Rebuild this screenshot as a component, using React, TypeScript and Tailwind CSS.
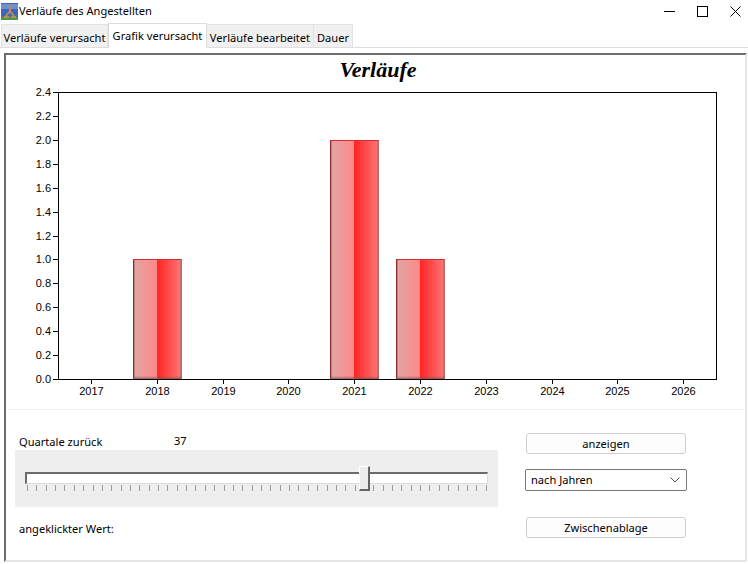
import React from "react";

const ys = ["2.4","2.2","2.0","1.8","1.6","1.4","1.2","1.0","0.8","0.6","0.4","0.2","0.0"];
const years = [2017,2018,2019,2020,2021,2022,2023,2024,2025,2026];
const L = 52, T = 37, R = 710, B = 324;
const bars = [{x:127,top:204},{x:324,top:85},{x:390,top:204}];

function Chart() {
  return (
    <svg width="740" height="354" viewBox="0 0 740 354" className="block">
      <defs>
        <linearGradient id="barL" x1="0" x2="1" y1="0" y2="0"><stop offset="0" stopColor="#dfa6a6"/><stop offset="1" stopColor="#ff8888"/></linearGradient>
        <linearGradient id="barR" x1="0" x2="1" y1="0" y2="0"><stop offset="0" stopColor="#ff2424"/><stop offset="1" stopColor="#ff7878"/></linearGradient>
        <linearGradient id="barB" x1="0" x2="0" y1="0" y2="1"><stop offset="0" stopColor="#805050" stopOpacity="0"/><stop offset="1" stopColor="#805050" stopOpacity=".75"/></linearGradient>
      </defs>
      <text x="372" y="22" textAnchor="middle" fontFamily="'Liberation Serif', serif" fontWeight="700" fontStyle="italic" fontSize="22" fill="#000">Verläufe</text>
      <rect x={L+.5} y={T+.5} width={R-L} height={B-T} fill="#fff" stroke="#000"/>
      {ys.map((v,i)=>{const y=T+(B-T)*i/12;return <g key={v}>
        <line x1={L-5} x2={L} y1={Math.round(y)+.5} y2={Math.round(y)+.5} stroke="#000"/>
        <text x={L-7} y={y+4} textAnchor="end" fontFamily="'Liberation Sans', sans-serif" fontSize="11" fill="#000">{v}</text></g>})}
      {years.map((v,i)=>{const x=Math.round(L+(R-L)*(i+.5)/10);return <g key={v}>
        <line x1={x+.5} x2={x+.5} y1={B} y2={B+5} stroke="#000"/>
        <text x={x+.5} y={B+16} textAnchor="middle" fontFamily="'Liberation Sans', sans-serif" fontSize="11" fill="#000">{v}</text></g>})}
      {bars.map(b=>{const t=b.top;const h=B-t;return <g key={b.x}>
        <rect x={b.x} y={t} width="24" height={h} fill="url(#barL)"/>
        <rect x={b.x+24} y={t} width="25" height={h} fill="url(#barR)"/>
        <rect x={b.x} y={t} width="1" height={h} fill="#8a2a2a"/>
        <rect x={b.x+1} y={t} width="1" height={h} fill="#b87070" opacity=".7"/>
        <rect x={b.x} y={t} width="49" height="1" fill="#cc3030"/>
        <path d={`M${b.x+49} ${t}V${B}H${b.x+47}V${t+2}Z`} fill="#b87070"/>
        <rect x={b.x} y={B-3} width="49" height="3" fill="url(#barB)"/>
      </g>})}
    </svg>
  );
}

export default function App() {
  return (
    <div className="w-[748px] h-[564px] bg-white overflow-hidden flex flex-col text-[11.1px] leading-4 text-black font-['Noto_Sans','Open_Sans',sans-serif]">
      <div className="h-[22px] flex items-center pl-[1px] shrink-0">
        <svg width="17" height="17" viewBox="0 0 17 17" className="shrink-0">
          <rect width="17" height="17" fill="#3f66b8"/>
          <rect y="1" width="17" height="5" fill="#6f8fd0"/>
          <rect y="14" width="17" height="3" fill="#4d9a45"/>
          <path d="M9 2v8M9 8L5 13M9 8l4 5M3 14h5M10 14h5" stroke="#b98f55" strokeWidth="2" fill="none"/>
        </svg>
        <span className="ml-[1px]">Verläufe des Angestellten</span>
        <div className="ml-auto flex items-center gap-[22px] pr-[7px]">
          <svg width="11" height="11" viewBox="0 0 11 11"><path d="M0 5.5h11" stroke="#000"/></svg>
          <svg width="11" height="11" viewBox="0 0 11 11"><rect x=".5" y=".5" width="10" height="10" fill="none" stroke="#000"/></svg>
          <svg width="11" height="11" viewBox="0 0 11 11"><path d="M.5.5l10 10M10.5.5l-10 10" stroke="#000"/></svg>
        </div>
      </div>
      <div className="h-[26px] shrink-0 flex items-end border-b border-[#dfdfdf] pl-[1px]">
        <div className="w-[107px] h-[23px] bg-[#f0f0f0] border border-b-0 border-[#e3e3e3] flex items-center justify-center pt-[3px]">Verläufe verursacht</div>
        <div className="w-[99px] h-[25px] bg-white border border-b-0 border-[#dcdcdc] flex justify-center items-start pt-[4px] -mb-px relative">Grafik verursacht</div>
        <div className="w-[107px] h-[23px] bg-[#f0f0f0] border border-b-0 border-l-0 border-[#e3e3e3] flex items-center justify-center pt-[3px]">Verläufe bearbeitet</div>
        <div className="w-[39px] h-[23px] bg-[#f0f0f0] border border-b-0 border-l-0 border-[#e3e3e3] flex items-center justify-center pt-[3px]">Dauer</div>
      </div>
      <div className="mt-[5px] ml-[4px] mr-[1px] h-[509px] border-l-2 border-t-2 border-[#6d6d6d] border-r-2 border-r-[#e6e6e6] border-b-2 border-b-[#e6e6e6] border-solid flex flex-col">
        <Chart />
        <div className="ml-[2px] border-t border-[#eeeeee] flex-1 flex">
          <div className="w-[490px] shrink-0 flex flex-col pl-[7px]">
            <div className="h-[40px] flex items-end pl-[4px]">
              <span className="w-[155px]">Quartale zurück</span>
              <span className="-translate-y-[1px]">37</span>
            </div>
            <div className="h-[57px] bg-[#eeeeee] pt-[22px] pl-[10px] pr-[10px]">
              <div className="relative w-[463px]">
                <div className="h-[12px] bg-white border-t-2 border-l-2 border-t-[#6b6b6b] border-l-[#6b6b6b] border-r border-b border-r-[#dcdcdc] border-b-[#dcdcdc]"></div>
                <div className="flex justify-between mt-px pl-[2px] pr-[1px]">
                  {Array.from({length:50}).map((_,i)=><div key={i} className="w-px h-[6px] bg-[#9a9a9a]"></div>)}
                </div>
                <div className="absolute left-[334px] -top-[6px] w-[11px] h-[25px] bg-[#ececec] border-t border-l border-white border-r-2 border-b-2 border-r-[#636363] border-b-[#636363]"></div>
              </div>
            </div>
            <div className="pl-[4px] pt-[14px]">angeklickter Wert:</div>
          </div>
          <div className="flex flex-col pl-[27px] pt-[23px] w-[200px]">
            <button className="ml-[1px] w-[160px] h-[21px] rounded-[3px] border border-[#cfcfcf] bg-[#fdfdfd] flex items-center justify-center">anzeigen</button>
            <div className="mt-[15px] w-[162px] h-[22px] rounded-[2px] border border-[#7a7a7a] bg-white flex items-center justify-between pl-[5px] pr-[6px]">
              <span>nach Jahren</span>
              <svg width="10" height="6" viewBox="0 0 10 6"><path d="M.5.5L5 5l4.5-4.5" stroke="#555" fill="none"/></svg>
            </div>
            <button className="ml-[1px] mt-[26px] w-[160px] h-[21px] rounded-[3px] border border-[#cfcfcf] bg-[#fdfdfd] flex items-center justify-center">Zwischenablage</button>
          </div>
        </div>
      </div>
    </div>
  );
}
